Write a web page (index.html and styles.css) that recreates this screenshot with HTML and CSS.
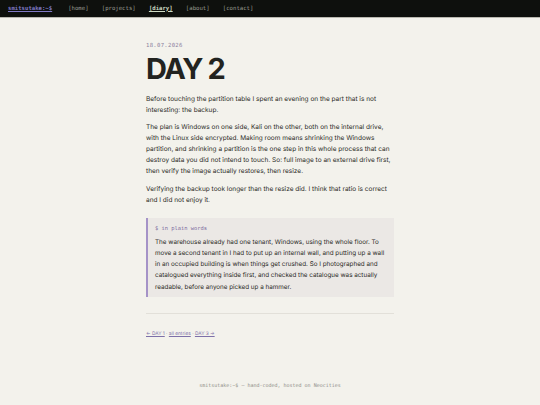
FILE: index.html
```html
<!DOCTYPE html>
<html lang="en">
<head>
<meta charset="utf-8">
<title>DAY 2</title>
<link rel="stylesheet" href="styles.css">
</head>
<body>
<header class="topbar">
  <a class="brand" href="#">smitsutake:~$</a>
  <nav class="menu">
    <a href="#">[home]</a>
    <a href="#">[projects]</a>
    <a class="current" href="#">[diary]</a>
    <a href="#">[about]</a>
    <a href="#">[contact]</a>
  </nav>
</header>
<main class="entry">
  <div class="date">18.07.2026</div>
  <h1 class="title">DAY 2</h1>
  <p>Before touching the partition table I spent an evening on the part that is not interesting: the backup.</p>
  <p>The plan is Windows on one side, Kali on the other, both on the internal drive, with the Linux side encrypted. Making room means shrinking the Windows partition, and shrinking a partition is the one step in this whole process that can destroy data you did not intend to touch. So: full image to an external drive first, then verify the image actually restores, then resize.</p>
  <p>Verifying the backup took longer than the resize did. I think that ratio is correct and I did not enjoy it.</p>
  <aside class="plain">
    <div class="plain-label">$ in plain words</div>
    <p>The warehouse already had one tenant, Windows, using the whole floor. To move a second tenant in I had to put up an internal wall, and putting up a wall in an occupied building is when things get crushed. So I photographed and catalogued everything inside first, and checked the catalogue was actually readable, before anyone picked up a hammer.</p>
  </aside>
  <hr class="rule">
  <nav class="pager">
    <a href="#">← DAY 1</a> <span class="dot">·</span> <a href="#">all entries</a> <span class="dot">·</span> <a href="#">DAY 3 →</a>
  </nav>
</main>
<footer class="foot">smitsutake:~$ — hand-coded, hosted on Neocities</footer>
</body>
</html>
```

FILE: styles.css
```css
html, body {
  margin: 0;
  padding: 0;
}
body {
  background: #f3f2ec;
  color: #2b2b27;
  font-family: Inter, "Noto Sans", sans-serif;
  text-rendering: geometricPrecision;
}
.topbar {
  background: #0e100d;
  height: 17px;
  border-bottom: 1px solid #b9b8b0;
  display: flex;
  align-items: center;
  padding: 0 8px;
  font-family: "DejaVu Sans Mono", monospace;
  font-size: 5.65px;
}
.brand {
  color: #7f78c4;
  text-decoration: underline;
  font-weight: bold;
  margin-right: 16px;
}
.menu {
  display: flex;
  gap: 13.2px;
}
.menu a {
  color: #9c9f94;
  text-decoration: none;
}
.menu a.current {
  color: #cfdcc4;
  font-weight: bold;
  text-decoration: underline;
}
.entry {
  width: 248px;
  margin: 0 auto;
  padding: 25px 0 0 0;
}
.date {
  font-family: "DejaVu Sans Mono", monospace;
  font-size: 5.6px;
  line-height: 6.5px;
  color: #8a7f9c;
  letter-spacing: 0.3px;
}
.title {
  font-size: 29px;
  font-weight: 700;
  margin: 4px 0 10px 0;
  letter-spacing: -1.4px;
  line-height: 30px;
  color: #222320;
}
.entry p {
  font-size: 6.5px;
  line-height: 11px;
  margin: 0 0 6.5px 0;
}
.plain {
  background: #ebe8e5;
  border-left: 2px solid #a593c7;
  padding: 8px 4px 4px 7px;
  margin: 12.5px 0 16px 0;
}
.plain-label {
  font-family: "DejaVu Sans Mono", monospace;
  font-size: 5.4px;
  line-height: 6.5px;
  color: #7d6d9f;
  margin-bottom: 4px;
}
.entry .plain p {
  font-size: 6.3px;
  line-height: 11.3px;
  margin: 0;
}
.rule {
  border: none;
  border-top: 1px solid #e2e0d9;
  margin: 0 0 17px 0;
}
.pager {
  font-size: 4.8px;
  line-height: 6px;
  color: #9a94a6;
}
.pager a {
  color: #7d70a8;
}
.foot {
  text-align: center;
  font-family: "DejaVu Sans Mono", monospace;
  font-size: 5px;
  line-height: 6px;
  color: #8f8e88;
  margin-top: 46px;
}
```
